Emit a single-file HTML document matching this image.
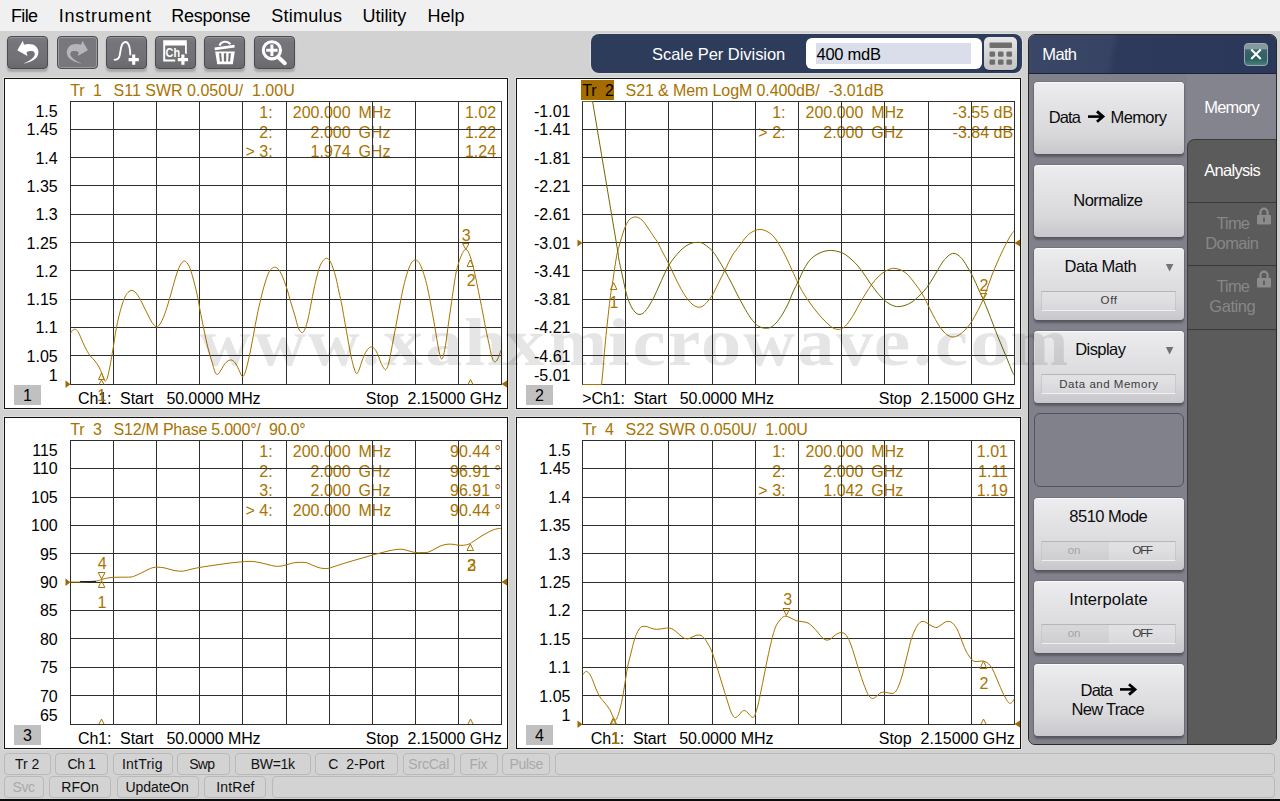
<!DOCTYPE html>
<html><head><meta charset="utf-8"><title>Network Analyzer</title>
<style>
html,body{margin:0;padding:0;}
body{width:1280px;height:801px;overflow:hidden;background:#d2d2d2;position:relative;font-family:"Liberation Sans",sans-serif;}
div{position:absolute;box-sizing:border-box;}
#menu{left:0;top:0;width:1280px;height:31px;background:#f0f0f0;}
.tb{top:36px;width:41px;height:33px;border-radius:4px;border:1.5px solid #4b4b4f;background:linear-gradient(#7b7b80,#74747a 20%,#717176 70%,#68686d);box-shadow:0 3px 2px rgba(0,0,0,.2), inset 0 1px 0 rgba(255,255,255,.2);}
.tb.dis{background:#78787c;border-color:#4e4e52;box-shadow:inset 0 0 0 1px #9a9a9e;}
#scale{left:591px;top:34px;width:431px;height:39px;border-radius:8px;background:#2e3c5c;box-shadow:0 0 0 1px rgba(255,255,255,.25);}
#sinput{left:806px;top:38px;width:176px;height:31px;border-radius:6px;background:#fff;}
#ssel{left:816px;top:43px;width:155px;height:21px;background:#d9deea;}
#skey{left:984px;top:37px;width:33px;height:33px;border-radius:5px;background:linear-gradient(#e6e6e6,#c4c4c4);box-shadow:0 1px 1px rgba(0,0,0,.4);}
.pl{background:#fff;border:1px solid #14140c;box-shadow:0 0 0 1px rgba(255,255,255,.35);}
#wm{left:205px;top:296px;width:880px;height:90px;font-family:"Liberation Serif",serif;font-weight:bold;font-size:70px;line-height:90px;color:rgba(0,0,0,.085);white-space:pre;letter-spacing:9px;}
#math{left:1028px;top:34px;width:249px;height:711px;border-radius:7px;background:#84848e;border:1px solid #2a2a22;overflow:hidden;}
#mhead{left:0;top:0;width:247px;height:39px;background:linear-gradient(100deg,#3a4767 0%,#364363 33%,#2d3a5c 36%,#2c3859 100%);border-bottom:1px solid #1c2238;}
#mbody{left:0;top:39px;width:158px;height:671px;background:#81818b;}
.tab{left:158px;width:90px;background:#5b5b5b;border-top:1px solid #3b3b35;border-left:1px solid #3f3f39;}
.mb{left:5px;width:149.5px;height:72px;border-radius:4px;background:linear-gradient(#ededef,#e4e4e7 30%,#d9d9dc 70%,#c8c8cc);box-shadow:0 3px 2px rgba(40,40,50,.4), 0 0 0 1px rgba(100,100,110,.45), inset 0 1px 0 rgba(255,255,255,.7);}
.mbe{left:5px;width:150px;height:73.5px;border-radius:6px;background:#81818b;border:1.5px solid #52525c;}
.inset{left:6.6px;width:135.6px;height:20px;background:rgba(255,255,255,.18);border:1px solid rgba(160,160,168,.35);border-top-color:#b6b6ba;border-bottom-color:rgba(255,255,255,.6);}
.inset i{position:absolute;left:0;top:0;width:67px;height:18px;background:rgba(0,0,0,.045);}
.sb{height:22px;border-radius:4px;background:#d3d3d3;border:1px solid #b9b9b9;}
#svgo{position:absolute;left:0;top:0;}
text{font-family:"Liberation Sans",sans-serif;white-space:pre;}
</style></head><body>
<div id="menu"></div>
<div class="tb" style="left:7px"></div>
<div class="tb dis" style="left:56.5px"></div>
<div class="tb" style="left:106px"></div>
<div class="tb" style="left:155px"></div>
<div class="tb" style="left:204.4px"></div>
<div class="tb" style="left:253.5px"></div>
<div id="scale"></div><div id="sinput"></div><div id="ssel"></div><div id="skey"></div>
<div class="pl" style="left:4px;top:78px;width:504px;height:331px"></div>
<div class="pl" style="left:516px;top:78px;width:505px;height:331px"></div>
<div class="pl" style="left:4px;top:417px;width:504px;height:332px"></div>
<div class="pl" style="left:516px;top:417px;width:505px;height:332px"></div>
<div id="math">
 <div id="mhead"></div>
 <div id="mbody">
  <div class="mb" style="top:8px"></div>
  <div class="mb" style="top:91px"></div>
  <div class="mb" style="top:174px"><div class="inset" style="top:43px"></div></div>
  <div class="mb" style="top:257px"><div class="inset" style="top:43px"></div></div>
  <div class="mbe" style="top:339px"></div>
  <div class="mb" style="top:424px"><div class="inset" style="top:43px"><i></i></div></div>
  <div class="mb" style="top:507px"><div class="inset" style="top:43px"><i></i></div></div>
  <div class="mb" style="top:590px"></div>
 </div>
 <div class="tab" style="top:103.5px;height:64px;border-top-left-radius:8px;border-top-width:1.5px"></div>
 <div class="tab" style="top:167px;height:64px;border-top-width:1.5px"></div>
 <div class="tab" style="top:230px;height:64px;border-top-width:1.5px"></div>
 <div class="tab" style="top:293.5px;height:420px;border-top-width:1.5px"></div>
</div>
<!-- status bar -->
<div class="sb" style="left:4px;top:753px;width:47px"></div>
<div class="sb" style="left:55px;top:753px;width:53px"></div>
<div class="sb" style="left:113px;top:753px;width:60px"></div>
<div class="sb" style="left:177px;top:753px;width:53px"></div>
<div class="sb" style="left:235px;top:753px;width:76px"></div>
<div class="sb" style="left:315px;top:753px;width:83px"></div>
<div class="sb" style="left:403px;top:753px;width:52px"></div>
<div class="sb" style="left:460px;top:753px;width:38px"></div>
<div class="sb" style="left:502px;top:753px;width:48px"></div>
<div class="sb" style="left:555px;top:753px;width:720px"></div>
<div class="sb" style="left:4px;top:776px;width:40px"></div>
<div class="sb" style="left:49px;top:776px;width:62px"></div>
<div class="sb" style="left:117px;top:776px;width:82px"></div>
<div class="sb" style="left:204px;top:776px;width:62px"></div>
<div class="sb" style="left:272px;top:776px;width:1003px"></div>
<div style="left:0;top:799px;width:1280px;height:2px;background:#0a0a0a"></div>
<svg id="svgo" width="1280" height="801" viewBox="0 0 1280 801">
<text x="11" y="21.6" font-size="18" fill="#000" textLength="27" lengthAdjust="spacing">File</text>
<text x="58.7" y="21.6" font-size="18" fill="#000" textLength="92.3" lengthAdjust="spacing">Instrument</text>
<text x="171.2" y="21.6" font-size="18" fill="#000" textLength="79.3" lengthAdjust="spacing">Response</text>
<text x="271.2" y="21.6" font-size="18" fill="#000" textLength="70.8" lengthAdjust="spacing">Stimulus</text>
<text x="362.5" y="21.6" font-size="18" fill="#000" textLength="43.8" lengthAdjust="spacing">Utility</text>
<text x="427.5" y="21.6" font-size="18" fill="#000" textLength="37.0" lengthAdjust="spacing">Help</text>
<text x="652" y="59.8" font-size="16.5" fill="#fff" textLength="133.3" lengthAdjust="spacing">Scale Per Division</text>
<text x="816.5" y="59.8" font-size="16.5" fill="#000" textLength="64.5" lengthAdjust="spacing">400 mdB</text>
<g fill="#6e6e6e"><rect x="989.5" y="42.5" width="22.5" height="5.5" rx="1"/><rect x="989.5" y="51.5" width="5.6" height="5.2" rx="1.2"/><rect x="997.95" y="51.5" width="5.6" height="5.2" rx="1.2"/><rect x="1006.4" y="51.5" width="5.6" height="5.2" rx="1.2"/><rect x="989.5" y="59.5" width="5.6" height="5.2" rx="1.2"/><rect x="997.95" y="59.5" width="5.6" height="5.2" rx="1.2"/><rect x="1006.4" y="59.5" width="5.6" height="5.2" rx="1.2"/></g>
<text x="1042.3" y="59.9" font-size="16.5" fill="#fff" textLength="34.7" lengthAdjust="spacing">Math</text>
<defs><linearGradient id="cg" x1="0" y1="0" x2="0" y2="1"><stop offset="0" stop-color="#8499a0"/><stop offset=".26" stop-color="#8499a0"/><stop offset=".28" stop-color="#3a6669"/><stop offset=".7" stop-color="#2f6062"/><stop offset="1" stop-color="#438478"/></linearGradient></defs><rect x="1244.5" y="43.5" width="23" height="22" rx="3.5" fill="url(#cg)" stroke="#9fa6b3" stroke-width="1"/><path d="M1251.2 49.5l9.6 9.6M1260.8 49.5l-9.6 9.6" stroke="#fff" stroke-width="2.1" fill="none"/>
<text x="1048.8" y="122.9" font-size="16.5" fill="#0c0c0c" textLength="32.2" lengthAdjust="spacing">Data</text>
<path d="M1088 116.6H1102.5" stroke="#000" stroke-width="2.6" fill="none"/><path d="M1097 111.39999999999999L1103 116.6L1097 121.8" stroke="#000" stroke-width="2.8" fill="none" stroke-linejoin="miter"/>
<text x="1110.6" y="122.9" font-size="16.5" fill="#0c0c0c" textLength="56.4" lengthAdjust="spacing">Memory</text>
<text x="1073.3" y="205.8" font-size="16.5" fill="#0c0c0c" textLength="69.7" lengthAdjust="spacing">Normalize</text>
<text x="1064.6" y="271.8" font-size="16.5" fill="#0c0c0c" textLength="72.2" lengthAdjust="spacing">Data Math</text>
<text x="1075.2" y="354.6" font-size="16.5" fill="#0c0c0c" textLength="50.8" lengthAdjust="spacing">Display</text>
<text x="1069.3" y="521.8" font-size="16.5" fill="#0c0c0c" textLength="78.5" lengthAdjust="spacing">8510 Mode</text>
<text x="1069.3" y="604.6" font-size="16.5" fill="#0c0c0c" textLength="78.5" lengthAdjust="spacing">Interpolate</text>
<text x="1080.6" y="695.6" font-size="16.5" fill="#0c0c0c" textLength="32.3" lengthAdjust="spacing">Data</text>
<path d="M1120 689.4H1134.5" stroke="#000" stroke-width="2.6" fill="none"/><path d="M1129 684.1999999999999L1135 689.4L1129 694.6" stroke="#000" stroke-width="2.8" fill="none" stroke-linejoin="miter"/>
<text x="1071.6" y="714.6" font-size="16.5" fill="#0c0c0c" textLength="73.2" lengthAdjust="spacing">New Trace</text>
<path d="M1165.8 264h7.6l-3.8 7.4z" fill="#737373"/>
<path d="M1165.8 347h7.6l-3.8 7.4z" fill="#737373"/>
<text x="1100.5" y="304.4" font-size="11.5" fill="#3c3c3c" textLength="16.5" lengthAdjust="spacing">Off</text>
<text x="1059.3" y="387.5" font-size="11.5" fill="#3c3c3c" textLength="98.7" lengthAdjust="spacing">Data and Memory</text>
<text x="1067.8" y="554.4" font-size="11.5" fill="#a4a4a4" textLength="12.7" lengthAdjust="spacing">on</text>
<text x="1132.5" y="554.4" font-size="11.5" fill="#3c3c3c" textLength="20.5" lengthAdjust="spacing">OFF</text>
<text x="1067.8" y="637.4" font-size="11.5" fill="#a4a4a4" textLength="12.7" lengthAdjust="spacing">on</text>
<text x="1132.5" y="637.4" font-size="11.5" fill="#3c3c3c" textLength="20.5" lengthAdjust="spacing">OFF</text>
<text x="1204.2" y="113.1" font-size="16.5" fill="#fff" textLength="55.6" lengthAdjust="spacing">Memory</text>
<text x="1204.2" y="175.6" font-size="16.5" fill="#fff" textLength="56.6" lengthAdjust="spacing">Analysis</text>
<text x="1216.4" y="229" font-size="16.5" fill="#878787" textLength="33.6" lengthAdjust="spacing">Time</text>
<text x="1205.3" y="248.6" font-size="16.5" fill="#878787" textLength="53.7" lengthAdjust="spacing">Domain</text>
<text x="1216.4" y="292.2" font-size="16.5" fill="#878787" textLength="33.6" lengthAdjust="spacing">Time</text>
<text x="1209.3" y="311.6" font-size="16.5" fill="#878787" textLength="46.5" lengthAdjust="spacing">Gating</text>
<path d="M1260.4 215.5v-3.2a3.6 3.6 0 0 1 7.2 0v3.2" stroke="#8c8c8c" stroke-width="2.2" fill="none"/><rect x="1257" y="215.0" width="14" height="9.5" rx="1" fill="#8c8c8c"/><rect x="1263.1" y="217.5" width="1.8" height="4.5" fill="#5b5b5b"/>
<path d="M1260.4 278.5v-3.2a3.6 3.6 0 0 1 7.2 0v3.2" stroke="#8c8c8c" stroke-width="2.2" fill="none"/><rect x="1257" y="278.0" width="14" height="9.5" rx="1" fill="#8c8c8c"/><rect x="1263.1" y="280.5" width="1.8" height="4.5" fill="#5b5b5b"/>
<text x="15" y="768.8" font-size="14" fill="#111" textLength="24.3" lengthAdjust="spacing">Tr 2</text>
<text x="67.5" y="768.8" font-size="14" fill="#111" textLength="28.3" lengthAdjust="spacing">Ch 1</text>
<text x="122" y="768.8" font-size="14" fill="#111" textLength="40.5" lengthAdjust="spacing">IntTrig</text>
<text x="189.3" y="768.8" font-size="14" fill="#111" textLength="25.7" lengthAdjust="spacing">Swp</text>
<text x="250.8" y="768.8" font-size="14" fill="#111" textLength="44.2" lengthAdjust="spacing">BW=1k</text>
<text x="328.3" y="768.8" font-size="14" fill="#111" textLength="56.2" lengthAdjust="spacing">C  2-Port</text>
<text x="408.3" y="768.8" font-size="14" fill="#a9a9a9" textLength="41.0" lengthAdjust="spacing">SrcCal</text>
<text x="469.5" y="768.8" font-size="14" fill="#a9a9a9" textLength="18.0" lengthAdjust="spacing">Fix</text>
<text x="509.5" y="768.8" font-size="14" fill="#a9a9a9" textLength="33.8" lengthAdjust="spacing">Pulse</text>
<text x="12.5" y="791.8" font-size="14" fill="#a9a9a9" textLength="22.5" lengthAdjust="spacing">Svc</text>
<text x="61.3" y="791.8" font-size="14" fill="#111" textLength="37.5" lengthAdjust="spacing">RFOn</text>
<text x="125.5" y="791.8" font-size="14" fill="#111" textLength="63.3" lengthAdjust="spacing">UpdateOn</text>
<text x="216.3" y="791.8" font-size="14" fill="#111" textLength="38.2" lengthAdjust="spacing">IntRef</text>
<path d="M17.3 50.2L22.8 40.8L24 44.8C28 43.6 33 43.8 36 46.5C39 49.5 39 54 37 57C34.5 60.5 29 62.5 23.5 63.6C28 61.5 32.5 59 34.3 56C35.5 53.5 34.5 51.3 32 51C30 50.8 28 51.3 26.5 52L27.4 56Z" fill="#fff"/>
<path d="M17.3 50.2L22.8 40.8L24 44.8C28 43.6 33 43.8 36 46.5C39 49.5 39 54 37 57C34.5 60.5 29 62.5 23.5 63.6C28 61.5 32.5 59 34.3 56C35.5 53.5 34.5 51.3 32 51C30 50.8 28 51.3 26.5 52L27.4 56Z" fill="#b6b6b8" transform="translate(105.2,0) scale(-1,1)"/>
<path d="M114.6 59.6C118.5 60.2 119.6 57.5 120.3 52C121 46 122 42 125.4 42C129 42 130 46.5 130.3 54.5" stroke="#fff" stroke-width="1.9" fill="none" stroke-linecap="round"/>
<path d="M128.6 59.6h10.2M133.7 54.5v10.2" stroke="#fff" stroke-width="3.1" fill="none"/>
<path d="M163.2 40.2h23.6v13.8h-1.8v-8.5h-19.8v14h10v2h-12z" fill="#fff"/>
<text x="165.6" y="56.8" font-size="12.5" font-weight="bold" fill="#fff" textLength="14.5" lengthAdjust="spacingAndGlyphs">Ch</text>
<path d="M176.6 59.6h12.6M182.9 53.3v12.6" stroke="#717175" stroke-width="5.4" fill="none"/>
<path d="M177.8 59.6h10.2M182.9 54.5v10.2" stroke="#fff" stroke-width="3.1" fill="none"/>
<path d="M219.5 45.6A6 5.2 0 0 1 230.4 44.2" stroke="#fff" stroke-width="2.1" fill="none"/>
<path d="M214.5 47.5L234.4 44.7L234.8 47.5L214.8 50.3Z" fill="#fff"/>
<path d="M215.2 51.4H234.8L232.8 64.3H217.2Z" fill="#fff"/>
<path d="M219 53.2h2.1l.8 8.3h-2zM223.9 53.2h2.3v8.3h-2.3zM228.7 53.2h2.2l-.8 8.3h-2z" fill="#717175"/>
<circle cx="271.9" cy="50.3" r="8.6" stroke="#fff" stroke-width="3.1" fill="none"/>
<path d="M266.2 50.3h11.4M271.9 44.6v11.4" stroke="#fff" stroke-width="3" fill="none"/>
<path d="M278.6 57.6L284.8 63.2" stroke="#fff" stroke-width="4" stroke-linecap="round" fill="none"/>

<text x="70.2" y="96" font-size="16" fill="#a87300" textLength="31.6" lengthAdjust="spacing">Tr  1</text>
<text x="113.6" y="96" font-size="16" fill="#a87300">S11 SWR 0.050U/  1.00U</text>
<text x="57.7" y="116.5" font-size="16" fill="#000" text-anchor="end">1.5</text>
<text x="57.7" y="135.3" font-size="16" fill="#000" text-anchor="end">1.45</text>
<text x="57.7" y="163.6" font-size="16" fill="#000" text-anchor="end">1.4</text>
<text x="57.7" y="191.9" font-size="16" fill="#000" text-anchor="end">1.35</text>
<text x="57.7" y="220.2" font-size="16" fill="#000" text-anchor="end">1.3</text>
<text x="57.7" y="248.5" font-size="16" fill="#000" text-anchor="end">1.25</text>
<text x="57.7" y="276.8" font-size="16" fill="#000" text-anchor="end">1.2</text>
<text x="57.7" y="305.1" font-size="16" fill="#000" text-anchor="end">1.15</text>
<text x="57.7" y="333.4" font-size="16" fill="#000" text-anchor="end">1.1</text>
<text x="57.7" y="361.7" font-size="16" fill="#000" text-anchor="end">1.05</text>
<text x="57.7" y="380.6" font-size="16" fill="#000" text-anchor="end">1</text>
<text x="272.7" y="118.0" font-size="16" fill="#a87300" text-anchor="end">1:</text>
<text x="350.6" y="118.0" font-size="16" fill="#a87300" text-anchor="end">200.000</text>
<text x="358.4" y="118.0" font-size="16" fill="#a87300">MHz</text>
<text x="496.1" y="118.0" font-size="16" fill="#a87300" text-anchor="end">1.02</text>
<text x="272.7" y="137.7" font-size="16" fill="#a87300" text-anchor="end">2:</text>
<text x="350.6" y="137.7" font-size="16" fill="#a87300" text-anchor="end">2.000</text>
<text x="358.4" y="137.7" font-size="16" fill="#a87300">GHz</text>
<text x="496.1" y="137.7" font-size="16" fill="#a87300" text-anchor="end">1.22</text>
<text x="272.7" y="157.4" font-size="16" fill="#a87300" text-anchor="end">&gt; 3:</text>
<text x="350.6" y="157.4" font-size="16" fill="#a87300" text-anchor="end">1.974</text>
<text x="358.4" y="157.4" font-size="16" fill="#a87300">GHz</text>
<text x="496.1" y="157.4" font-size="16" fill="#a87300" text-anchor="end">1.24</text>
<path d="M70.5 101V385M113.5 101V385M156.5 101V385M199.5 101V385M242.5 101V385M286.5 101V385M329.5 101V385M372.5 101V385M415.5 101V385M458.5 101V385M501.5 101V385M70 101.5H502M70 129.5H502M70 157.5H502M70 185.5H502M70 214.5H502M70 242.5H502M70 270.5H502M70 299.5H502M70 327.5H502M70 355.5H502M70 384.5H502" stroke="#2e2e2e" stroke-width="1" fill="none" shape-rendering="crispEdges"/>
<rect x="14" y="385" width="27" height="20" fill="#c0c0c0"/>
<text x="27.5" y="401" font-size="16" fill="#000" text-anchor="middle">1</text>
<text x="78.0" y="404" font-size="16" fill="#000" textLength="182.6" lengthAdjust="spacing">Ch1:  Start   50.0000 MHz</text>
<text x="501.8" y="404" font-size="16" fill="#000" text-anchor="end">Stop  2.15000 GHz</text>
<rect x="581" y="80" width="33" height="20" fill="#a36b00"/>
<text x="582.2" y="96" font-size="16" fill="#000" textLength="31.6" lengthAdjust="spacing">Tr  2</text>
<text x="625.6" y="96" font-size="16" fill="#a87300" textLength="258.2" lengthAdjust="spacing">S21 &amp; Mem LogM 0.400dB/  -3.01dB</text>
<text x="570.5" y="116.5" font-size="16" fill="#000" text-anchor="end">-1.01</text>
<text x="570.5" y="135.3" font-size="16" fill="#000" text-anchor="end">-1.41</text>
<text x="570.5" y="163.6" font-size="16" fill="#000" text-anchor="end">-1.81</text>
<text x="570.5" y="191.9" font-size="16" fill="#000" text-anchor="end">-2.21</text>
<text x="570.5" y="220.2" font-size="16" fill="#000" text-anchor="end">-2.61</text>
<text x="570.5" y="248.5" font-size="16" fill="#000" text-anchor="end">-3.01</text>
<text x="570.5" y="276.8" font-size="16" fill="#000" text-anchor="end">-3.41</text>
<text x="570.5" y="305.1" font-size="16" fill="#000" text-anchor="end">-3.81</text>
<text x="570.5" y="333.4" font-size="16" fill="#000" text-anchor="end">-4.21</text>
<text x="570.5" y="361.7" font-size="16" fill="#000" text-anchor="end">-4.61</text>
<text x="570.5" y="380.6" font-size="16" fill="#000" text-anchor="end">-5.01</text>
<text x="785.5" y="118.0" font-size="16" fill="#a87300" text-anchor="end">1:</text>
<text x="863.4" y="118.0" font-size="16" fill="#a87300" text-anchor="end">200.000</text>
<text x="871.1999999999999" y="118.0" font-size="16" fill="#a87300">MHz</text>
<text x="1013.1" y="118.0" font-size="16" fill="#a87300" text-anchor="end">-3.55 dB</text>
<text x="785.5" y="137.7" font-size="16" fill="#a87300" text-anchor="end">&gt; 2:</text>
<text x="863.4" y="137.7" font-size="16" fill="#a87300" text-anchor="end">2.000</text>
<text x="871.1999999999999" y="137.7" font-size="16" fill="#a87300">GHz</text>
<text x="1013.1" y="137.7" font-size="16" fill="#a87300" text-anchor="end">-3.84 dB</text>
<path d="M582.5 101V385M625.5 101V385M668.5 101V385M712.5 101V385M755.5 101V385M798.5 101V385M841.5 101V385M884.5 101V385M928.5 101V385M971.5 101V385M1014.5 101V385M582 101.5H1015M582 129.5H1015M582 157.5H1015M582 185.5H1015M582 214.5H1015M582 242.5H1015M582 270.5H1015M582 299.5H1015M582 327.5H1015M582 355.5H1015M582 384.5H1015" stroke="#2e2e2e" stroke-width="1" fill="none" shape-rendering="crispEdges"/>
<rect x="526" y="385" width="27" height="20" fill="#c0c0c0"/>
<text x="539.5" y="401" font-size="16" fill="#000" text-anchor="middle">2</text>
<text x="582.3" y="404" font-size="16" fill="#000" textLength="191.6" lengthAdjust="spacing">&gt;Ch1:  Start   50.0000 MHz</text>
<text x="1014.8" y="404" font-size="16" fill="#000" text-anchor="end">Stop  2.15000 GHz</text>
<text x="70.2" y="435" font-size="16" fill="#a87300" textLength="31.6" lengthAdjust="spacing">Tr  3</text>
<text x="113.6" y="435" font-size="16" fill="#a87300" textLength="192" lengthAdjust="spacing">S12/M Phase 5.000°/  90.0°</text>
<text x="57.7" y="455.5" font-size="16" fill="#000" text-anchor="end">115</text>
<text x="57.7" y="474.4" font-size="16" fill="#000" text-anchor="end">110</text>
<text x="57.7" y="502.8" font-size="16" fill="#000" text-anchor="end">105</text>
<text x="57.7" y="531.2" font-size="16" fill="#000" text-anchor="end">100</text>
<text x="57.7" y="559.6" font-size="16" fill="#000" text-anchor="end">95</text>
<text x="57.7" y="588.0" font-size="16" fill="#000" text-anchor="end">90</text>
<text x="57.7" y="616.4" font-size="16" fill="#000" text-anchor="end">85</text>
<text x="57.7" y="644.8" font-size="16" fill="#000" text-anchor="end">80</text>
<text x="57.7" y="673.2" font-size="16" fill="#000" text-anchor="end">75</text>
<text x="57.7" y="701.6" font-size="16" fill="#000" text-anchor="end">70</text>
<text x="57.7" y="720.6" font-size="16" fill="#000" text-anchor="end">65</text>
<text x="272.7" y="457.0" font-size="16" fill="#a87300" text-anchor="end">1:</text>
<text x="350.6" y="457.0" font-size="16" fill="#a87300" text-anchor="end">200.000</text>
<text x="358.4" y="457.0" font-size="16" fill="#a87300">MHz</text>
<text x="500.9" y="457.0" font-size="16" fill="#a87300" text-anchor="end">90.44 °</text>
<text x="272.7" y="476.7" font-size="16" fill="#a87300" text-anchor="end">2:</text>
<text x="350.6" y="476.7" font-size="16" fill="#a87300" text-anchor="end">2.000</text>
<text x="358.4" y="476.7" font-size="16" fill="#a87300">GHz</text>
<text x="500.9" y="476.7" font-size="16" fill="#a87300" text-anchor="end">96.91 °</text>
<text x="272.7" y="496.4" font-size="16" fill="#a87300" text-anchor="end">3:</text>
<text x="350.6" y="496.4" font-size="16" fill="#a87300" text-anchor="end">2.000</text>
<text x="358.4" y="496.4" font-size="16" fill="#a87300">GHz</text>
<text x="500.9" y="496.4" font-size="16" fill="#a87300" text-anchor="end">96.91 °</text>
<text x="272.7" y="516.1" font-size="16" fill="#a87300" text-anchor="end">&gt; 4:</text>
<text x="350.6" y="516.1" font-size="16" fill="#a87300" text-anchor="end">200.000</text>
<text x="358.4" y="516.1" font-size="16" fill="#a87300">MHz</text>
<text x="500.9" y="516.1" font-size="16" fill="#a87300" text-anchor="end">90.44 °</text>
<path d="M70.5 440V725M113.5 440V725M156.5 440V725M199.5 440V725M242.5 440V725M286.5 440V725M329.5 440V725M372.5 440V725M415.5 440V725M458.5 440V725M501.5 440V725M70 440.5H502M70 468.5H502M70 497.5H502M70 525.5H502M70 553.5H502M70 582.5H502M70 610.5H502M70 638.5H502M70 667.5H502M70 695.5H502M70 724.5H502" stroke="#2e2e2e" stroke-width="1" fill="none" shape-rendering="crispEdges"/>
<rect x="14" y="725" width="27" height="20" fill="#c0c0c0"/>
<text x="27.5" y="741" font-size="16" fill="#000" text-anchor="middle">3</text>
<text x="78.0" y="744" font-size="16" fill="#000" textLength="182.6" lengthAdjust="spacing">Ch1:  Start   50.0000 MHz</text>
<text x="501.8" y="744" font-size="16" fill="#000" text-anchor="end">Stop  2.15000 GHz</text>
<text x="582.2" y="435" font-size="16" fill="#a87300" textLength="31.6" lengthAdjust="spacing">Tr  4</text>
<text x="625.6" y="435" font-size="16" fill="#a87300">S22 SWR 0.050U/  1.00U</text>
<text x="570.5" y="455.5" font-size="16" fill="#000" text-anchor="end">1.5</text>
<text x="570.5" y="474.4" font-size="16" fill="#000" text-anchor="end">1.45</text>
<text x="570.5" y="502.8" font-size="16" fill="#000" text-anchor="end">1.4</text>
<text x="570.5" y="531.2" font-size="16" fill="#000" text-anchor="end">1.35</text>
<text x="570.5" y="559.6" font-size="16" fill="#000" text-anchor="end">1.3</text>
<text x="570.5" y="588.0" font-size="16" fill="#000" text-anchor="end">1.25</text>
<text x="570.5" y="616.4" font-size="16" fill="#000" text-anchor="end">1.2</text>
<text x="570.5" y="644.8" font-size="16" fill="#000" text-anchor="end">1.15</text>
<text x="570.5" y="673.2" font-size="16" fill="#000" text-anchor="end">1.1</text>
<text x="570.5" y="701.6" font-size="16" fill="#000" text-anchor="end">1.05</text>
<text x="570.5" y="720.6" font-size="16" fill="#000" text-anchor="end">1</text>
<text x="785.5" y="457.0" font-size="16" fill="#a87300" text-anchor="end">1:</text>
<text x="863.4" y="457.0" font-size="16" fill="#a87300" text-anchor="end">200.000</text>
<text x="871.1999999999999" y="457.0" font-size="16" fill="#a87300">MHz</text>
<text x="1008.0" y="457.0" font-size="16" fill="#a87300" text-anchor="end">1.01</text>
<text x="785.5" y="476.7" font-size="16" fill="#a87300" text-anchor="end">2:</text>
<text x="863.4" y="476.7" font-size="16" fill="#a87300" text-anchor="end">2.000</text>
<text x="871.1999999999999" y="476.7" font-size="16" fill="#a87300">GHz</text>
<text x="1008.0" y="476.7" font-size="16" fill="#a87300" text-anchor="end">1.11</text>
<text x="785.5" y="496.4" font-size="16" fill="#a87300" text-anchor="end">&gt; 3:</text>
<text x="863.4" y="496.4" font-size="16" fill="#a87300" text-anchor="end">1.042</text>
<text x="871.1999999999999" y="496.4" font-size="16" fill="#a87300">GHz</text>
<text x="1008.0" y="496.4" font-size="16" fill="#a87300" text-anchor="end">1.19</text>
<path d="M582.5 440V725M625.5 440V725M668.5 440V725M712.5 440V725M755.5 440V725M798.5 440V725M841.5 440V725M884.5 440V725M928.5 440V725M971.5 440V725M1014.5 440V725M582 440.5H1015M582 468.5H1015M582 497.5H1015M582 525.5H1015M582 553.5H1015M582 582.5H1015M582 610.5H1015M582 638.5H1015M582 667.5H1015M582 695.5H1015M582 724.5H1015" stroke="#2e2e2e" stroke-width="1" fill="none" shape-rendering="crispEdges"/>
<rect x="526" y="725" width="27" height="20" fill="#c0c0c0"/>
<text x="539.5" y="741" font-size="16" fill="#000" text-anchor="middle">4</text>
<text x="590.8" y="744" font-size="16" fill="#000" textLength="182.6" lengthAdjust="spacing">Ch1:  Start   50.0000 MHz</text>
<text x="1014.8" y="744" font-size="16" fill="#000" text-anchor="end">Stop  2.15000 GHz</text>
<path d="M70.6 333.0C70.9 332.6 71.7 331.2 72.4 330.6C73.1 330.0 74.1 329.0 75.0 329.2C75.9 329.4 77.0 330.1 78.0 331.6C79.0 333.1 79.8 335.4 81.0 338.0C82.2 340.6 83.5 344.1 85.0 347.0C86.5 349.9 88.3 353.3 90.0 355.6C91.7 357.9 93.5 359.1 95.0 361.0C96.5 362.9 97.8 364.8 99.0 367.0C100.2 369.2 101.2 371.9 102.0 374.0C102.8 376.1 103.4 378.4 104.0 379.6C104.6 380.8 105.0 381.4 105.6 381.0C106.2 380.6 106.9 379.5 107.6 377.0C108.3 374.5 109.1 370.7 110.0 366.0C110.9 361.3 112.0 355.0 113.0 349.0C114.0 343.0 115.0 335.5 116.0 330.0C117.0 324.5 118.0 320.2 119.0 316.0C120.0 311.8 121.0 308.2 122.0 305.0C123.0 301.8 124.0 299.1 125.0 297.0C126.0 294.9 126.8 293.5 128.0 292.4C129.2 291.3 130.7 290.3 132.0 290.4C133.3 290.5 134.7 291.6 136.0 293.0C137.3 294.4 138.7 296.7 140.0 299.0C141.3 301.3 142.7 304.3 144.0 307.0C145.3 309.7 146.7 312.4 148.0 315.0C149.3 317.6 150.6 320.4 152.0 322.4C153.4 324.4 155.1 326.7 156.4 327.0C157.7 327.3 158.7 325.8 160.0 324.0C161.3 322.2 162.7 319.3 164.0 316.0C165.3 312.7 166.7 308.3 168.0 304.0C169.3 299.7 170.7 294.7 172.0 290.0C173.3 285.3 174.7 280.1 176.0 276.0C177.3 271.9 178.6 268.1 180.0 265.6C181.4 263.1 182.9 260.9 184.4 261.0C185.9 261.1 187.6 263.2 189.0 266.0C190.4 268.8 191.7 273.3 193.0 278.0C194.3 282.7 195.8 288.7 197.0 294.0C198.2 299.3 198.8 304.0 200.0 310.0C201.2 316.0 202.7 323.7 204.0 330.0C205.3 336.3 206.7 342.7 208.0 348.0C209.3 353.3 210.8 358.0 212.0 362.0C213.2 366.0 214.1 369.9 215.0 372.0C215.9 374.1 216.6 374.7 217.6 374.4C218.6 374.1 219.8 371.8 221.0 370.0C222.2 368.2 223.7 365.2 225.0 363.6C226.3 362.0 227.8 360.9 229.0 360.4C230.2 359.9 231.2 359.8 232.4 360.4C233.6 361.0 234.8 362.2 236.0 364.0C237.2 365.8 238.3 368.9 239.4 371.0C240.5 373.1 241.5 376.3 242.4 376.6C243.3 376.9 244.1 375.4 245.0 373.0C245.9 370.6 247.0 366.2 248.0 362.0C249.0 357.8 250.0 353.0 251.0 348.0C252.0 343.0 253.0 337.3 254.0 332.0C255.0 326.7 255.8 321.7 257.0 316.0C258.2 310.3 259.7 303.5 261.0 298.0C262.3 292.5 263.7 287.3 265.0 283.0C266.3 278.7 267.8 274.4 269.0 272.0C270.2 269.6 271.0 269.2 272.0 268.4C273.0 267.6 273.8 266.9 275.0 267.2C276.2 267.5 277.7 268.2 279.0 270.0C280.3 271.8 281.7 274.8 283.0 278.0C284.3 281.2 285.7 284.8 287.0 289.0C288.3 293.2 289.7 298.5 291.0 303.0C292.3 307.5 293.8 311.8 295.0 316.0C296.2 320.2 297.2 325.2 298.4 328.0C299.6 330.8 300.9 332.4 302.0 332.6C303.1 332.8 304.0 331.3 305.0 329.0C306.0 326.7 307.0 323.2 308.0 319.0C309.0 314.8 310.0 309.0 311.0 304.0C312.0 299.0 313.0 293.7 314.0 289.0C315.0 284.3 316.0 279.8 317.0 276.0C318.0 272.2 318.9 268.7 320.0 266.0C321.1 263.3 322.4 261.3 323.6 260.0C324.8 258.7 325.9 258.2 327.0 258.4C328.1 258.6 329.0 259.4 330.0 261.0C331.0 262.6 332.0 265.2 333.0 268.0C334.0 270.8 335.0 274.0 336.0 278.0C337.0 282.0 338.0 287.3 339.0 292.0C340.0 296.7 341.0 300.8 342.0 306.0C343.0 311.2 344.0 317.3 345.0 323.0C346.0 328.7 347.0 334.5 348.0 340.0C349.0 345.5 350.0 351.3 351.0 356.0C352.0 360.7 353.1 365.1 354.0 368.0C354.9 370.9 355.8 373.3 356.6 373.6C357.4 373.9 358.1 372.1 359.0 370.0C359.9 367.9 360.9 363.9 362.0 361.0C363.1 358.1 364.4 354.6 365.6 352.4C366.8 350.2 367.9 348.9 369.0 348.0C370.1 347.1 371.0 346.8 372.0 347.0C373.0 347.2 374.0 348.1 375.0 349.4C376.0 350.7 377.0 352.7 378.0 355.0C379.0 357.3 380.0 360.8 381.0 363.0C382.0 365.2 383.2 367.3 384.0 368.4C384.8 369.5 385.3 370.1 386.0 369.4C386.7 368.7 387.6 367.3 388.4 364.4C389.2 361.5 390.1 356.7 391.0 352.0C391.9 347.3 393.0 341.3 394.0 336.0C395.0 330.7 396.0 325.3 397.0 320.0C398.0 314.7 399.0 309.2 400.0 304.0C401.0 298.8 402.0 293.5 403.0 289.0C404.0 284.5 405.0 280.5 406.0 277.0C407.0 273.5 408.0 270.5 409.0 268.0C410.0 265.5 410.9 263.3 412.0 262.0C413.1 260.7 414.4 259.9 415.6 260.0C416.8 260.1 417.9 260.9 419.0 262.4C420.1 263.9 421.0 266.4 422.0 269.0C423.0 271.6 424.0 274.5 425.0 278.0C426.0 281.5 427.0 285.3 428.0 290.0C429.0 294.7 430.0 300.7 431.0 306.0C432.0 311.3 433.0 316.3 434.0 322.0C435.0 327.7 436.1 334.7 437.0 340.0C437.9 345.3 438.8 350.8 439.6 354.0C440.4 357.2 440.9 358.8 441.6 359.0C442.3 359.2 442.9 357.8 443.6 355.0C444.3 352.2 445.2 347.2 446.0 342.0C446.8 336.8 447.6 330.0 448.4 324.0C449.2 318.0 450.1 312.0 451.0 306.0C451.9 300.0 452.8 293.5 453.6 288.0C454.4 282.5 455.2 277.2 456.0 273.0C456.8 268.8 457.7 266.0 458.6 263.0C459.5 260.0 460.7 257.1 461.6 255.0C462.5 252.9 463.3 251.5 464.0 250.6C464.7 249.7 465.3 249.2 466.0 249.4C466.7 249.6 467.6 250.4 468.4 252.0C469.2 253.6 470.1 256.0 471.0 259.0C471.9 262.0 473.0 265.8 474.0 270.0C475.0 274.2 476.0 279.2 477.0 284.0C478.0 288.8 479.0 294.0 480.0 299.0C481.0 304.0 482.0 308.8 483.0 314.0C484.0 319.2 485.0 325.0 486.0 330.0C487.0 335.0 488.1 339.7 489.0 344.0C489.9 348.3 490.8 353.1 491.6 356.0C492.4 358.9 493.2 360.6 494.0 361.4C494.8 362.2 495.6 361.9 496.4 361.0C497.2 360.1 498.2 357.8 499.0 356.0C499.8 354.2 500.7 351.0 501.0 350.0" stroke="#a87300" stroke-width="1" fill="none"/>
<path d="M603.0 370.0C603.3 366.0 604.3 353.3 605.0 346.0C605.7 338.7 606.3 332.3 607.0 326.0C607.7 319.7 608.3 313.7 609.0 308.0C609.7 302.3 610.3 296.7 611.0 292.0C611.7 287.3 612.3 284.3 613.0 280.0C613.7 275.7 614.3 270.3 615.0 266.0C615.7 261.7 616.2 257.8 617.0 254.0C617.8 250.2 619.0 246.5 620.0 243.0C621.0 239.5 622.0 236.0 623.0 233.0C624.0 230.0 624.8 227.3 626.0 225.0C627.2 222.7 628.3 220.3 630.0 219.0C631.7 217.7 634.0 216.8 636.0 217.0C638.0 217.2 640.0 218.2 642.0 220.0C644.0 221.8 646.0 225.2 648.0 228.0C650.0 230.8 652.3 234.5 654.0 237.0C655.7 239.5 656.5 240.3 658.0 243.0C659.5 245.7 661.3 249.7 663.0 253.0C664.7 256.3 666.6 259.3 668.4 263.0C670.2 266.7 672.1 271.0 674.0 275.0C675.9 279.0 678.0 283.3 680.0 287.0C682.0 290.7 684.0 294.2 686.0 297.0C688.0 299.8 690.3 302.4 692.0 304.0C693.7 305.6 694.8 306.1 696.0 306.6C697.2 307.1 697.8 307.3 699.0 307.2C700.2 307.1 701.5 307.0 703.0 306.0C704.5 305.0 706.4 302.8 708.0 301.0C709.6 299.2 710.7 297.8 712.4 295.0C714.1 292.2 715.9 288.2 718.0 284.0C720.1 279.8 722.7 274.7 725.0 270.0C727.3 265.3 729.5 260.2 732.0 256.0C734.5 251.8 737.7 248.2 740.0 245.0C742.3 241.8 744.0 239.2 746.0 237.0C748.0 234.8 749.7 233.3 752.0 232.0C754.3 230.7 757.3 229.4 760.0 229.4C762.7 229.4 765.7 230.7 768.0 232.0C770.3 233.3 772.0 234.7 774.0 237.0C776.0 239.3 778.0 242.7 780.0 246.0C782.0 249.3 784.0 253.0 786.0 257.0C788.0 261.0 789.9 265.5 792.0 270.0C794.1 274.5 796.4 280.0 798.4 284.0C800.4 288.0 802.1 290.8 804.0 294.0C805.9 297.2 808.0 300.2 810.0 303.0C812.0 305.8 814.0 308.5 816.0 311.0C818.0 313.5 820.0 315.8 822.0 318.0C824.0 320.2 826.2 322.3 828.0 324.0C829.8 325.7 831.3 327.1 833.0 328.0C834.7 328.9 836.3 329.4 838.0 329.4C839.7 329.4 841.3 329.1 843.0 328.0C844.7 326.9 846.2 325.3 848.0 323.0C849.8 320.7 852.0 317.3 854.0 314.0C856.0 310.7 858.0 306.5 860.0 303.0C862.0 299.5 864.0 296.2 866.0 293.0C868.0 289.8 870.0 286.7 872.0 284.0C874.0 281.3 876.0 279.0 878.0 277.0C880.0 275.0 882.0 273.3 884.0 272.0C886.0 270.7 888.2 269.6 890.0 269.0C891.8 268.4 893.2 268.2 895.0 268.4C896.8 268.6 899.0 269.1 901.0 270.0C903.0 270.9 905.0 272.2 907.0 274.0C909.0 275.8 911.0 278.5 913.0 281.0C915.0 283.5 917.2 286.3 919.0 289.0C920.8 291.7 922.4 294.2 924.0 297.0C925.6 299.8 926.9 303.0 928.4 306.0C929.9 309.0 931.4 312.0 933.0 315.0C934.6 318.0 936.3 321.3 938.0 324.0C939.7 326.7 941.3 329.1 943.0 331.0C944.7 332.9 946.3 334.4 948.0 335.4C949.7 336.4 951.3 337.0 953.0 337.0C954.7 337.0 956.2 336.6 958.0 335.6C959.8 334.6 962.0 332.9 964.0 331.0C966.0 329.1 968.0 326.8 970.0 324.0C972.0 321.2 974.0 317.7 976.0 314.0C978.0 310.3 980.2 306.2 982.0 302.0C983.8 297.8 985.3 293.5 987.0 289.0C988.7 284.5 990.3 279.3 992.0 275.0C993.7 270.7 995.3 266.8 997.0 263.0C998.7 259.2 1000.3 255.5 1002.0 252.0C1003.7 248.5 1005.5 244.8 1007.0 242.0C1008.5 239.2 1009.8 236.8 1011.0 235.0C1012.2 233.2 1013.5 231.7 1014.0 231.0" stroke="#a87300" stroke-width="1" fill="none"/>
<path d="M618.4 255.0C618.5 255.8 618.4 256.8 619.0 260.0C619.6 263.2 621.0 269.3 622.0 274.0C623.0 278.7 624.0 283.8 625.0 288.0C626.0 292.2 626.8 295.7 628.0 299.0C629.2 302.3 630.7 305.7 632.0 308.0C633.3 310.3 634.7 311.9 636.0 313.0C637.3 314.1 638.7 314.5 640.0 314.4C641.3 314.3 642.5 313.8 644.0 312.4C645.5 311.0 647.3 308.6 649.0 306.0C650.7 303.4 652.3 300.3 654.0 297.0C655.7 293.7 657.3 289.7 659.0 286.0C660.7 282.3 662.4 278.3 664.0 275.0C665.6 271.7 666.7 268.8 668.4 266.0C670.1 263.2 672.1 260.5 674.0 258.0C675.9 255.5 678.0 253.0 680.0 251.0C682.0 249.0 684.0 247.3 686.0 246.0C688.0 244.7 690.2 243.6 692.0 243.0C693.8 242.4 695.3 242.4 697.0 242.4C698.7 242.4 700.2 242.2 702.0 243.0C703.8 243.8 706.3 245.7 708.0 247.0C709.7 248.3 710.7 249.0 712.4 251.0C714.1 253.0 715.9 255.7 718.0 259.0C720.1 262.3 722.7 266.8 725.0 271.0C727.3 275.2 729.8 279.8 732.0 284.0C734.2 288.2 736.0 292.2 738.0 296.0C740.0 299.8 742.0 303.5 744.0 307.0C746.0 310.5 748.1 314.2 750.0 317.0C751.9 319.8 753.7 321.9 755.4 323.6C757.1 325.3 758.4 326.2 760.0 327.0C761.6 327.8 763.3 328.1 765.0 328.2C766.7 328.3 768.2 328.5 770.0 327.6C771.8 326.7 774.0 325.1 776.0 323.0C778.0 320.9 780.0 318.2 782.0 315.0C784.0 311.8 786.2 307.8 788.0 304.0C789.8 300.2 791.3 295.8 793.0 292.0C794.7 288.2 796.6 284.8 798.4 281.0C800.2 277.2 802.1 272.5 804.0 269.0C805.9 265.5 808.0 262.3 810.0 260.0C812.0 257.7 814.0 256.3 816.0 255.0C818.0 253.7 820.0 252.7 822.0 252.0C824.0 251.3 826.2 250.8 828.0 250.6C829.8 250.4 831.0 250.4 833.0 250.6C835.0 250.8 837.8 251.3 840.0 252.0C842.2 252.7 844.0 253.7 846.0 255.0C848.0 256.3 850.0 258.2 852.0 260.0C854.0 261.8 856.0 263.7 858.0 266.0C860.0 268.3 862.0 271.2 864.0 274.0C866.0 276.8 868.0 280.2 870.0 283.0C872.0 285.8 874.0 288.5 876.0 291.0C878.0 293.5 880.0 296.0 882.0 298.0C884.0 300.0 886.0 301.7 888.0 303.0C890.0 304.3 892.2 305.4 894.0 306.0C895.8 306.6 897.2 306.7 899.0 306.6C900.8 306.5 902.8 306.2 905.0 305.4C907.2 304.6 909.8 303.4 912.0 302.0C914.2 300.6 916.0 298.8 918.0 297.0C920.0 295.2 922.0 293.3 924.0 291.0C926.0 288.7 928.0 286.0 930.0 283.0C932.0 280.0 934.0 276.3 936.0 273.0C938.0 269.7 940.2 265.7 942.0 263.0C943.8 260.3 945.5 258.5 947.0 257.0C948.5 255.5 949.8 254.6 951.0 254.0C952.2 253.4 952.8 253.2 954.0 253.4C955.2 253.6 956.5 253.9 958.0 255.0C959.5 256.1 961.3 257.8 963.0 260.0C964.7 262.2 966.3 265.2 968.0 268.0C969.7 270.8 971.3 273.7 973.0 277.0C974.7 280.3 976.3 284.3 978.0 288.0C979.7 291.7 981.3 295.2 983.0 299.0C984.7 302.8 986.3 306.8 988.0 311.0C989.7 315.2 991.3 319.7 993.0 324.0C994.7 328.3 996.3 332.8 998.0 337.0C999.7 341.2 1001.3 345.0 1003.0 349.0C1004.7 353.0 1006.5 357.3 1008.0 361.0C1009.5 364.7 1011.0 368.7 1012.0 371.0C1013.0 373.3 1013.7 374.3 1014.0 375.0" stroke="#6f6a00" stroke-width="1" fill="none"/>
<path d="M70.6 582.0C72.2 582.0 75.8 582.2 80.0 582.0C84.2 581.8 92.3 581.4 96.0 581.0C99.7 580.6 99.7 580.0 102.0 579.4C104.3 578.8 107.0 578.0 110.0 577.6C113.0 577.2 116.5 577.3 120.0 577.2C123.5 577.1 128.3 577.3 131.0 577.0C133.7 576.7 134.2 576.1 136.0 575.4C137.8 574.7 140.0 573.6 142.0 572.6C144.0 571.6 146.2 570.4 148.0 569.6C149.8 568.8 151.3 568.0 153.0 567.6C154.7 567.2 156.2 567.2 158.0 567.2C159.8 567.2 162.0 567.4 164.0 567.8C166.0 568.2 168.0 568.9 170.0 569.4C172.0 569.9 174.2 570.5 176.0 570.8C177.8 571.1 179.3 571.2 181.0 571.2C182.7 571.2 184.2 571.0 186.0 570.6C187.8 570.2 189.7 569.5 192.0 569.0C194.3 568.5 197.0 567.9 200.0 567.4C203.0 566.9 206.7 566.3 210.0 565.8C213.3 565.3 216.7 564.9 220.0 564.4C223.3 563.9 226.7 563.4 230.0 563.0C233.3 562.6 237.0 562.3 240.0 562.0C243.0 561.7 245.7 561.5 248.0 561.4C250.3 561.3 252.0 561.4 254.0 561.6C256.0 561.8 257.7 562.1 260.0 562.6C262.3 563.1 265.5 564.0 268.0 564.6C270.5 565.2 273.0 565.9 275.0 566.2C277.0 566.5 278.2 566.4 280.0 566.2C281.8 566.0 284.0 565.5 286.0 565.0C288.0 564.5 290.0 563.6 292.0 563.2C294.0 562.8 295.7 562.5 298.0 562.4C300.3 562.3 303.7 562.2 306.0 562.6C308.3 563.0 310.0 564.2 312.0 565.0C314.0 565.8 316.2 566.8 318.0 567.4C319.8 568.0 321.3 568.2 323.0 568.4C324.7 568.6 326.2 568.7 328.0 568.4C329.8 568.1 331.7 567.3 334.0 566.6C336.3 565.9 339.3 564.8 342.0 564.0C344.7 563.2 347.3 562.4 350.0 561.6C352.7 560.8 355.3 560.0 358.0 559.2C360.7 558.4 363.3 557.8 366.0 557.0C368.7 556.2 371.3 555.3 374.0 554.6C376.7 553.9 379.3 553.3 382.0 552.6C384.7 551.9 387.5 551.1 390.0 550.6C392.5 550.1 394.8 549.6 397.0 549.4C399.2 549.2 401.0 549.1 403.0 549.4C405.0 549.7 407.0 550.5 409.0 551.0C411.0 551.5 412.8 552.1 415.0 552.4C417.2 552.7 419.8 552.6 422.0 552.6C424.2 552.6 426.0 552.7 428.0 552.2C430.0 551.7 432.0 550.4 434.0 549.4C436.0 548.4 438.0 547.0 440.0 546.2C442.0 545.4 444.0 544.7 446.0 544.4C448.0 544.1 450.0 544.1 452.0 544.2C454.0 544.3 456.0 545.0 458.0 545.2C460.0 545.4 462.2 545.4 464.0 545.2C465.8 545.0 467.3 544.7 469.0 544.0C470.7 543.3 472.2 542.2 474.0 541.0C475.8 539.8 478.0 538.3 480.0 537.0C482.0 535.7 484.0 534.5 486.0 533.4C488.0 532.3 490.2 531.2 492.0 530.4C493.8 529.6 495.5 529.1 497.0 528.8C498.5 528.5 500.3 528.5 501.0 528.4" stroke="#a87300" stroke-width="1" fill="none"/>
<path d="M582.6 675.0C583.0 674.5 584.3 672.6 585.0 672.0C585.7 671.4 586.2 671.2 587.0 671.6C587.8 672.0 589.0 673.0 590.0 674.6C591.0 676.2 592.0 678.6 593.0 681.0C594.0 683.4 594.8 686.3 596.0 689.0C597.2 691.7 598.7 694.8 600.0 697.0C601.3 699.2 602.7 700.3 604.0 702.0C605.3 703.7 606.8 705.3 608.0 707.0C609.2 708.7 610.2 710.3 611.0 712.0C611.8 713.7 612.3 715.7 613.0 717.0C613.7 718.3 614.3 719.8 615.0 720.0C615.7 720.2 616.2 719.8 617.0 718.0C617.8 716.2 619.0 712.8 620.0 709.0C621.0 705.2 622.1 700.0 623.0 695.0C623.9 690.0 624.8 684.0 625.6 679.0C626.4 674.0 627.1 669.3 628.0 665.0C628.9 660.7 630.0 657.0 631.0 653.0C632.0 649.0 633.0 644.3 634.0 641.0C635.0 637.7 636.0 635.2 637.0 633.0C638.0 630.8 639.0 629.1 640.0 628.0C641.0 626.9 641.8 626.6 643.0 626.4C644.2 626.2 645.7 626.3 647.0 626.6C648.3 626.9 649.7 627.8 651.0 628.2C652.3 628.6 653.7 629.0 655.0 629.2C656.3 629.4 657.5 629.3 659.0 629.2C660.5 629.1 662.3 628.6 664.0 628.4C665.7 628.2 667.5 627.8 669.0 628.0C670.5 628.2 671.7 628.7 673.0 629.4C674.3 630.1 675.7 631.3 677.0 632.4C678.3 633.5 679.7 635.0 681.0 636.0C682.3 637.0 683.7 638.2 685.0 638.6C686.3 639.0 687.7 638.9 689.0 638.6C690.3 638.3 691.7 637.2 693.0 636.6C694.3 636.0 695.7 635.4 697.0 635.2C698.3 635.0 699.8 634.9 701.0 635.4C702.2 635.9 702.8 636.6 704.0 638.0C705.2 639.4 706.7 641.7 708.0 644.0C709.3 646.3 710.7 648.7 712.0 652.0C713.3 655.3 714.7 659.8 716.0 664.0C717.3 668.2 718.7 672.7 720.0 677.0C721.3 681.3 722.7 685.7 724.0 690.0C725.3 694.3 726.8 699.3 728.0 703.0C729.2 706.7 730.0 709.7 731.0 712.0C732.0 714.3 733.2 716.1 734.0 717.0C734.8 717.9 735.2 717.7 736.0 717.4C736.8 717.1 738.0 716.0 739.0 715.0C740.0 714.0 741.0 712.1 742.0 711.4C743.0 710.7 744.0 710.3 745.0 710.6C746.0 710.9 747.0 712.0 748.0 713.0C749.0 714.0 750.2 715.7 751.0 716.4C751.8 717.1 752.3 717.6 753.0 717.4C753.7 717.2 754.2 717.1 755.0 715.0C755.8 712.9 757.0 709.0 758.0 705.0C759.0 701.0 760.0 695.8 761.0 691.0C762.0 686.2 763.0 681.0 764.0 676.0C765.0 671.0 766.0 665.8 767.0 661.0C768.0 656.2 769.0 651.3 770.0 647.0C771.0 642.7 772.0 638.5 773.0 635.0C774.0 631.5 774.8 628.5 776.0 626.0C777.2 623.5 778.8 621.5 780.0 620.0C781.2 618.5 782.0 617.6 783.0 617.0C784.0 616.4 784.8 616.1 786.0 616.2C787.2 616.3 788.3 616.9 790.0 617.6C791.7 618.3 794.0 619.9 796.0 620.6C798.0 621.3 800.0 621.2 802.0 621.6C804.0 622.0 806.2 622.1 808.0 623.0C809.8 623.9 811.3 625.4 813.0 627.0C814.7 628.6 816.5 630.9 818.0 632.6C819.5 634.3 820.7 636.2 822.0 637.4C823.3 638.6 824.7 639.7 826.0 640.0C827.3 640.3 828.7 640.1 830.0 639.4C831.3 638.7 832.7 637.0 834.0 636.0C835.3 635.0 836.7 634.0 838.0 633.4C839.3 632.8 840.4 632.5 841.6 632.6C842.8 632.7 843.9 633.1 845.0 634.0C846.1 634.9 847.0 636.2 848.0 638.0C849.0 639.8 850.0 642.3 851.0 645.0C852.0 647.7 853.0 650.8 854.0 654.0C855.0 657.2 856.0 660.8 857.0 664.0C858.0 667.2 859.0 670.0 860.0 673.0C861.0 676.0 862.0 679.2 863.0 682.0C864.0 684.8 865.0 687.7 866.0 690.0C867.0 692.3 868.0 694.6 869.0 696.0C870.0 697.4 871.0 698.1 872.0 698.4C873.0 698.7 874.0 698.2 875.0 697.6C876.0 697.0 877.0 695.8 878.0 695.0C879.0 694.2 879.8 693.1 881.0 692.6C882.2 692.1 883.7 692.1 885.0 692.2C886.3 692.3 887.7 692.8 889.0 693.0C890.3 693.2 891.8 693.7 893.0 693.4C894.2 693.1 895.0 692.4 896.0 691.0C897.0 689.6 898.0 687.5 899.0 685.0C900.0 682.5 901.0 679.5 902.0 676.0C903.0 672.5 904.0 668.0 905.0 664.0C906.0 660.0 907.0 656.0 908.0 652.0C909.0 648.0 910.0 643.3 911.0 640.0C912.0 636.7 913.0 634.3 914.0 632.0C915.0 629.7 916.0 627.6 917.0 626.0C918.0 624.4 919.0 623.2 920.0 622.4C921.0 621.6 922.0 621.4 923.0 621.4C924.0 621.4 924.8 621.8 926.0 622.4C927.2 623.0 928.7 624.2 930.0 625.0C931.3 625.8 932.8 626.6 934.0 627.0C935.2 627.4 935.8 627.7 937.0 627.4C938.2 627.1 939.7 625.9 941.0 625.0C942.3 624.1 943.8 622.8 945.0 622.2C946.2 621.6 947.0 621.4 948.0 621.4C949.0 621.4 950.0 621.5 951.0 622.0C952.0 622.5 953.0 623.4 954.0 624.6C955.0 625.8 956.0 627.1 957.0 629.0C958.0 630.9 959.0 633.5 960.0 636.0C961.0 638.5 962.0 641.5 963.0 644.0C964.0 646.5 965.0 649.0 966.0 651.0C967.0 653.0 968.0 654.5 969.0 656.0C970.0 657.5 971.0 659.1 972.0 660.0C973.0 660.9 973.8 661.2 975.0 661.4C976.2 661.6 977.7 661.5 979.0 661.4C980.3 661.3 981.7 660.8 983.0 661.0C984.3 661.2 985.8 661.9 987.0 662.6C988.2 663.3 989.0 664.2 990.0 665.4C991.0 666.6 992.0 668.1 993.0 670.0C994.0 671.9 995.0 674.7 996.0 677.0C997.0 679.3 998.0 681.7 999.0 684.0C1000.0 686.3 1001.0 688.8 1002.0 691.0C1003.0 693.2 1004.1 695.3 1005.0 697.0C1005.9 698.7 1006.8 700.3 1007.6 701.4C1008.4 702.5 1009.2 703.3 1010.0 703.4C1010.8 703.5 1011.7 702.7 1012.4 702.0C1013.1 701.3 1013.7 699.5 1014.0 699.0" stroke="#a87300" stroke-width="1" fill="none"/>
<path d="M582.5 384.5L601.6 384.5L603.0 370.0" stroke="#a87300" stroke-width="1" fill="none"/>
<path d="M582.5 101.5L592.6 101.5L618.4 255.0" stroke="#6f6a00" stroke-width="1" fill="none"/>
<g fill="none" stroke="#a87300" stroke-width="1">
<!-- P1 markers -->
<path d="M98.5 379.5h6l-3-6.5z"/><path d="M99 384.5l2.5-4.5l2.5 4.5"/>
<path d="M462.5 243.5h6.5l-3.2 6z"/><path d="M467 266.5h6.4l-3.2-6.5z"/><path d="M468 384.5l2.5-5l2.5 5"/>
<!-- P2 markers -->
<path d="M610.5 289.5h6.4l-3.2-6.8z"/><path d="M980.2 293.5h6.6l-3.3 5.5z"/>
<!-- P3 markers -->
<path d="M98.2 572.5h6.8l-3.4 6.5z"/><path d="M98.4 587.5h6.4l-3.2-7z"/><path d="M99 724l2.5-5l2.5 5"/>
<path d="M467 550.5h6.6l-3.3-6.5z"/><path d="M468 724l2.5-5l2.5 5"/>
<!-- P4 markers -->
<path d="M610.4 724h6l-3-6.5z"/><path d="M611 724l2.5-4.5l2.5 4.5"/>
<path d="M783 608.5h6.8l-3.4 7z"/><path d="M980 668.5h6.8l-3.4-7.5z"/><path d="M981 724l2.5-5l2.5 5"/>
</g>
<g fill="#a06800">
<path d="M65.5 380.5v7.5l5-3.7z"/><path d="M507 380.5v7l-5.5-3.5z"/>
<path d="M577.5 239.5v7l5-3.5z"/><path d="M1020 239.5v7l-5.5-3.5z"/>
<path d="M65.5 578.5v7.5l5-3.7z"/><path d="M507 578.5v7l-5.5-3.5z"/>
<path d="M577.5 720.5v7.5l5-3.7z"/><path d="M1020 720.5v7l-5.5-3.5z"/>
</g>
<g font-size="16" fill="#a87300" text-anchor="middle">
<text x="466.2" y="240.5">3</text><text x="471.3" y="285.6">2</text><text x="101.6" y="400.5">1</text>
<text x="614" y="308.4">1</text><text x="984" y="290.6">2</text>
<text x="102.2" y="569">4</text><text x="102" y="607.6">1</text><text x="471.4" y="570.6">2</text><text x="471.8" y="570.6">3</text>
<text x="787.6" y="605">3</text><text x="615.7" y="743.8">1</text><text x="984" y="689">2</text>
</g>
<path d="M80 581.5H96" stroke="#222" stroke-width="1" fill="none"/>
<g font-size="67" font-weight="bold" fill="#000" fill-opacity="0.1" text-anchor="middle"><text x="225.1" y="365" textLength="51.6" lengthAdjust="spacingAndGlyphs" style="font-family:'Liberation Serif',serif">w</text><text x="280.1" y="365" textLength="51.6" lengthAdjust="spacingAndGlyphs" style="font-family:'Liberation Serif',serif">w</text><text x="333.9" y="365" textLength="51.6" lengthAdjust="spacingAndGlyphs" style="font-family:'Liberation Serif',serif">w</text><text x="371.0" y="365" textLength="18.3" lengthAdjust="spacingAndGlyphs" style="font-family:'Liberation Serif',serif">.</text><text x="403.1" y="365" textLength="39.6" lengthAdjust="spacingAndGlyphs" style="font-family:'Liberation Serif',serif">x</text><text x="443.9" y="365" textLength="36.8" lengthAdjust="spacingAndGlyphs" style="font-family:'Liberation Serif',serif">a</text><text x="485.6" y="365" textLength="43.2" lengthAdjust="spacingAndGlyphs" style="font-family:'Liberation Serif',serif">h</text><text x="525.1" y="365" textLength="39.6" lengthAdjust="spacingAndGlyphs" style="font-family:'Liberation Serif',serif">x</text><text x="578.1" y="365" textLength="58.0" lengthAdjust="spacingAndGlyphs" style="font-family:'Liberation Serif',serif">m</text><text x="618.7" y="365" textLength="22.4" lengthAdjust="spacingAndGlyphs" style="font-family:'Liberation Serif',serif">i</text><text x="649.0" y="365" textLength="33.1" lengthAdjust="spacingAndGlyphs" style="font-family:'Liberation Serif',serif">c</text><text x="684.2" y="365" textLength="32.3" lengthAdjust="spacingAndGlyphs" style="font-family:'Liberation Serif',serif">r</text><text x="721.0" y="365" textLength="40.7" lengthAdjust="spacingAndGlyphs" style="font-family:'Liberation Serif',serif">o</text><text x="769.1" y="365" textLength="51.6" lengthAdjust="spacingAndGlyphs" style="font-family:'Liberation Serif',serif">w</text><text x="815.8" y="365" textLength="36.8" lengthAdjust="spacingAndGlyphs" style="font-family:'Liberation Serif',serif">a</text><text x="854.7" y="365" textLength="36.9" lengthAdjust="spacingAndGlyphs" style="font-family:'Liberation Serif',serif">v</text><text x="891.9" y="365" textLength="36.9" lengthAdjust="spacingAndGlyphs" style="font-family:'Liberation Serif',serif">e</text><text x="922.5" y="365" textLength="18.3" lengthAdjust="spacingAndGlyphs" style="font-family:'Liberation Serif',serif">.</text><text x="951.5" y="365" textLength="33.1" lengthAdjust="spacingAndGlyphs" style="font-family:'Liberation Serif',serif">c</text><text x="990.6" y="365" textLength="40.7" lengthAdjust="spacingAndGlyphs" style="font-family:'Liberation Serif',serif">o</text><text x="1039.3" y="365" textLength="58.0" lengthAdjust="spacingAndGlyphs" style="font-family:'Liberation Serif',serif">m</text></g>

</svg>
</body></html>
